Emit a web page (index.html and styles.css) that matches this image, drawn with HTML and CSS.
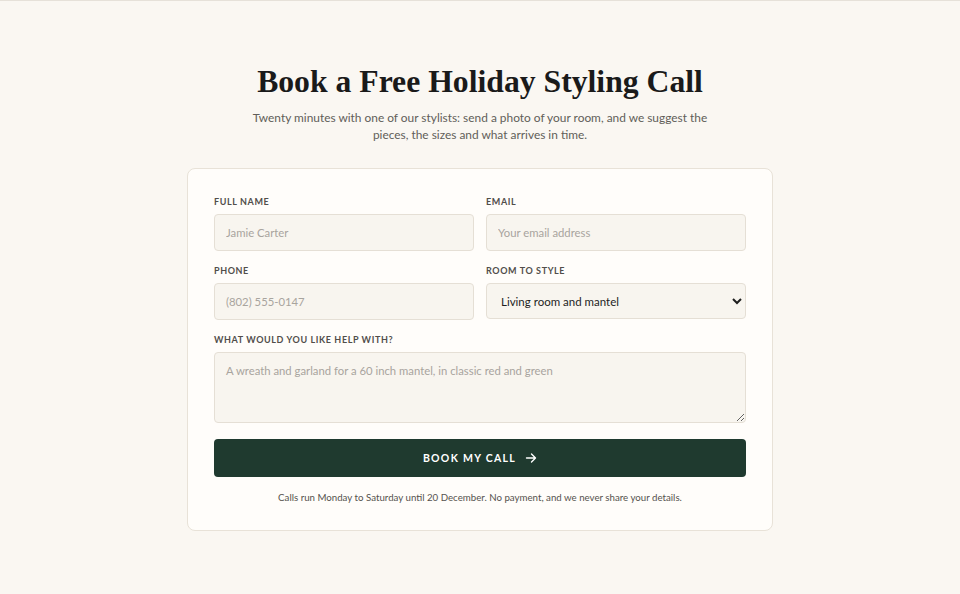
FILE: index.html
```html
<!DOCTYPE html>
<html lang="en">
<head>
<meta charset="utf-8">
<title>Book a Free Holiday Styling Call</title>
<link rel="stylesheet" href="styles.css">
</head>
<body>
<main class="page">
  <header class="intro">
    <h1 class="title">Book a Free Holiday Styling Call</h1>
    <p class="lead">Twenty minutes with one of our stylists: send a photo of your room, and we suggest the pieces, the sizes and what arrives in time.</p>
  </header>
  <form class="card">
    <div class="grid">
      <label class="field">
        <span class="label">Full name</span>
        <input class="input" type="text" placeholder="Jamie Carter">
      </label>
      <label class="field">
        <span class="label">Email</span>
        <input class="input" type="email" placeholder="Your email address">
      </label>
      <label class="field">
        <span class="label">Phone</span>
        <input class="input" type="tel" placeholder="(802) 555-0147">
      </label>
      <label class="field">
        <span class="label">Room to style</span>
        <select class="input select">
          <option>Living room and mantel</option>
        </select>
      </label>
      <label class="field wide">
        <span class="label">What would you like help with?</span>
        <textarea class="input textarea" placeholder="A wreath and garland for a 60 inch mantel, in classic red and green"></textarea>
      </label>
    </div>
    <button class="button" type="button">Book my call
      <svg class="arrow" width="12" height="12" viewBox="0 0 12 12" fill="none" stroke="currentColor" stroke-width="1.4" stroke-linecap="round" stroke-linejoin="round"><path d="M1.5 6h9M6.5 2l4 4-4 4"/></svg>
    </button>
    <p class="note">Calls run Monday to Saturday until 20 December. No payment, and we never share your details.</p>
  </form>
</main>
</body>
</html>
```
FILE: styles.css
```css
* { box-sizing: border-box; }
html, body { margin: 0; }
body {
  background: #faf7f2;
  border-top: 1px solid #e6e1d9;
  font-family: Lato, "Noto Sans", sans-serif;
  color: #1b1b1b;
  min-height: 594px;
}
.page {
  display: flex;
  flex-direction: column;
  align-items: center;
  padding-top: 58px;
}
.intro {
  text-align: center;
  width: 600px;
}
.title {
  margin: 0;
  font-family: "Liberation Serif", "DejaVu Serif", serif;
  font-weight: 700;
  font-size: 31.7px;
  line-height: 46px;
  color: #1a1a1a;
  white-space: nowrap;
}
.lead {
  margin: 4px auto 0;
  width: 470px;
  font-size: 11.9px;
  line-height: 17px;
  color: #615e59;
}
.card {
  margin-top: 25px;
  width: 586px;
  background: #fffdfa;
  border: 1px solid #e8e2d8;
  border-radius: 8px;
  padding: 26px 26px 26px;
}
.grid {
  display: grid;
  grid-template-columns: 1fr 1fr;
  column-gap: 12px;
  row-gap: 13px;
}
.field {
  display: flex;
  flex-direction: column;
  gap: 5px;
}
.wide { grid-column: 1 / -1; }
.label {
  font-size: 9px;
  line-height: 14px;
  font-weight: 700;
  letter-spacing: 0.6px;
  text-transform: uppercase;
  color: #514e4a;
}
.input {
  height: 37px;
  width: 100%;
  border: 1px solid #e5dfd5;
  border-radius: 4px;
  background: #f8f5ef;
  padding: 0 11px;
  font-family: inherit;
  font-size: 11.3px;
  color: #1e1e1e;
  outline: none;
}
.input::placeholder { color: #a8a49e; }
.select {
  height: 36px;
  padding: 0 8px 0 10px;
  font-size: 11.5px;
  color: #1e1e1e;
}
.textarea {
  height: 71px;
  padding: 10px 11px;
  resize: vertical;
  line-height: 16px;
}
.button {
  margin-top: 16px;
  width: 100%;
  height: 38px;
  border: 0;
  border-radius: 4px;
  background: #1f3a2f;
  color: #ffffff;
  font-family: inherit;
  font-size: 10.5px;
  font-weight: 700;
  letter-spacing: 1.3px;
  text-transform: uppercase;
  display: flex;
  align-items: center;
  justify-content: center;
  gap: 9px;
}
.arrow { display: block; }
.note {
  margin: 13px 0 0;
  text-align: center;
  font-size: 9.7px;
  line-height: 14px;
  color: #55524d;
}
```
